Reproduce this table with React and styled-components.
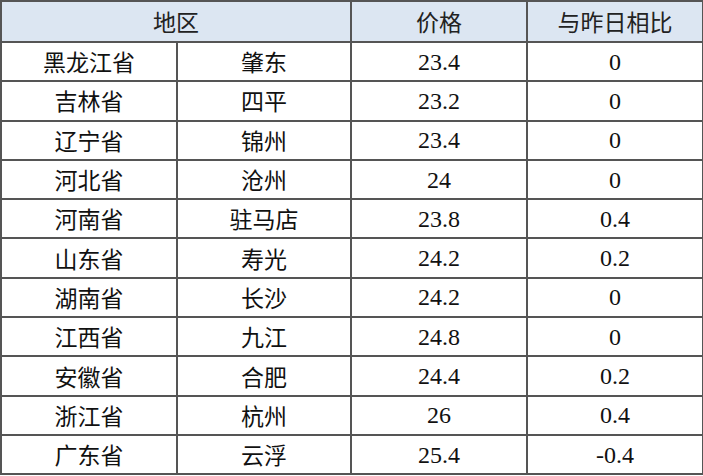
import React from 'react';
import styled, { createGlobalStyle } from 'styled-components';

const GlobalStyle = createGlobalStyle`
  html, body {
    margin: 0;
    padding: 0;
    background: #ffffff;
  }
`;

const rows = [
  { province: '黑龙江省', city: '肇东', price: '23.4', change: '0' },
  { province: '吉林省', city: '四平', price: '23.2', change: '0' },
  { province: '辽宁省', city: '锦州', price: '23.4', change: '0' },
  { province: '河北省', city: '沧州', price: '24', change: '0' },
  { province: '河南省', city: '驻马店', price: '23.8', change: '0.4' },
  { province: '山东省', city: '寿光', price: '24.2', change: '0.2' },
  { province: '湖南省', city: '长沙', price: '24.2', change: '0' },
  { province: '江西省', city: '九江', price: '24.8', change: '0' },
  { province: '安徽省', city: '合肥', price: '24.4', change: '0.2' },
  { province: '浙江省', city: '杭州', price: '26', change: '0.4' },
  { province: '广东省', city: '云浮', price: '25.4', change: '-0.4' },
];

const PriceTable = styled.table`
  width: 702px;
  table-layout: fixed;
  border-collapse: collapse;
  border: 2px solid #5a5a5a;
  font-family: "Liberation Serif", "Noto Sans CJK SC", serif;
  font-size: 24px;
  color: #111;

  th, td {
    padding: 0;
    text-align: center;
    vertical-align: middle;
    border: 2px solid #555;
    line-height: 1;
  }
`;

const Col = styled.col`
  width: ${(p) => p.$w}px;
`;

const HeadRow = styled.tr`
  height: 41px;
  background: #dce6f2;

  th {
    font-weight: normal;
    color: #222;
    font-family: "Noto Sans CJK SC", sans-serif;
    font-size: 23px;
  }
`;

const BodyRow = styled.tr`
  height: 39.3px;
`;

const Cell = styled.td`
  font-family: ${(p) => (p.$cjk ? '"Noto Sans CJK SC", sans-serif' : '"Liberation Serif", serif')};
  font-size: ${(p) => (p.$cjk ? '23px' : '24px')};
  color: #111;

  && {
    border-right: ${(p) => (p.$thinRight ? '1px solid #000' : '2px solid #555')};
  }
`;

const App = () => (
  <>
    <GlobalStyle />
    <PriceTable>
      <colgroup>
        <Col $w={176} />
        <Col $w={174} />
        <Col $w={176} />
        <Col $w={176} />
      </colgroup>
      <thead>
        <HeadRow>
          <th colSpan="2">地区</th>
          <th>价格</th>
          <th>与昨日相比</th>
        </HeadRow>
      </thead>
      <tbody>
        {rows.map((r) => (
          <BodyRow key={r.province}>
            <Cell $cjk $thinRight>{r.province}</Cell>
            <Cell $cjk>{r.city}</Cell>
            <Cell>{r.price}</Cell>
            <Cell>{r.change}</Cell>
          </BodyRow>
        ))}
      </tbody>
    </PriceTable>
  </>
);

export default App;
